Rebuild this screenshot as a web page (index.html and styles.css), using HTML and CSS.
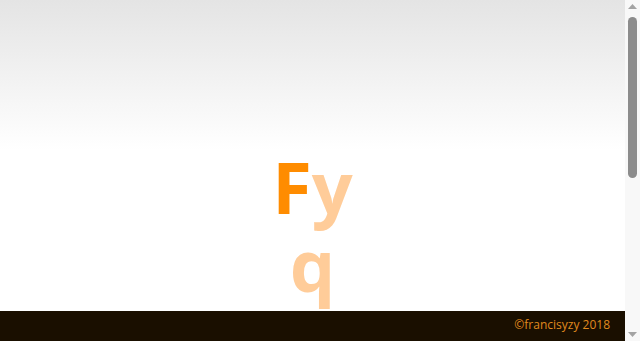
FILE: index.html
```html
<!DOCTYPE html>
<html lang="en">
<head>
    <meta charset="UTF-8">
    <meta name="viewport" content="width=device-width, initial-scale=1.0">
    <title>francisyzy</title>
    <link rel="stylesheet" href="styles.css">
</head>
<body>
    <main class="letters">
        <div class="row"><span class="hit">F</span><span class="miss">y</span></div>
        <div class="row"><span class="miss">q</span></div>
    </main>

    <footer class="footer">©francisyzy 2018</footer>

    <!-- Page scrollbar -->
    <div class="scrollbar">
        <svg class="arrow" width="15" height="14" viewBox="0 0 15 14"><polygon points="3,9 12,9 7.5,4" fill="#a3a3a3"/></svg>
        <div class="track"><div class="thumb"></div></div>
        <svg class="arrow" width="15" height="14" viewBox="0 0 15 14"><polygon points="3,5 12,5 7.5,10" fill="#a3a3a3"/></svg>
    </div>
</body>
</html>
```

FILE: styles.css
```css
html {
    background: #fff;
}

body {
    margin: 0;
    min-height: 667px;
    margin-right: 15px;
    background: linear-gradient(#e4e4e4 0, #fff 150px) no-repeat;
    font-family: "Open Sans", "DejaVu Sans", sans-serif;
}

.letters {
    padding-top: 147px;
    text-align: center;
}

.row {
    font-size: 72px;
    font-weight: bold;
    line-height: 78px;
}

.hit {
    color: #ff8c00;
}

.miss {
    color: #ffcc99;
}

/* Footer stays pinned to the bottom */
.footer {
    position: fixed;
    left: 0;
    right: 15px;
    bottom: 0;
    height: 30px;
    line-height: 28px;
    padding-right: 15px;
    text-align: right;
    background: #1a0f00;
    color: #e08a1e;
    font-size: 12px;
}

.scrollbar {
    position: fixed;
    top: 0;
    right: 0;
    bottom: 0;
    width: 15px;
    display: flex;
    flex-direction: column;
    background: #f8f8f8;
}

.arrow {
    display: block;
    flex: none;
}

.track {
    flex: 1;
    padding: 3px 3px 0 3px;
}

.thumb {
    height: 161px;
    border-radius: 5px;
    background: #8c8c8c;
}
```
